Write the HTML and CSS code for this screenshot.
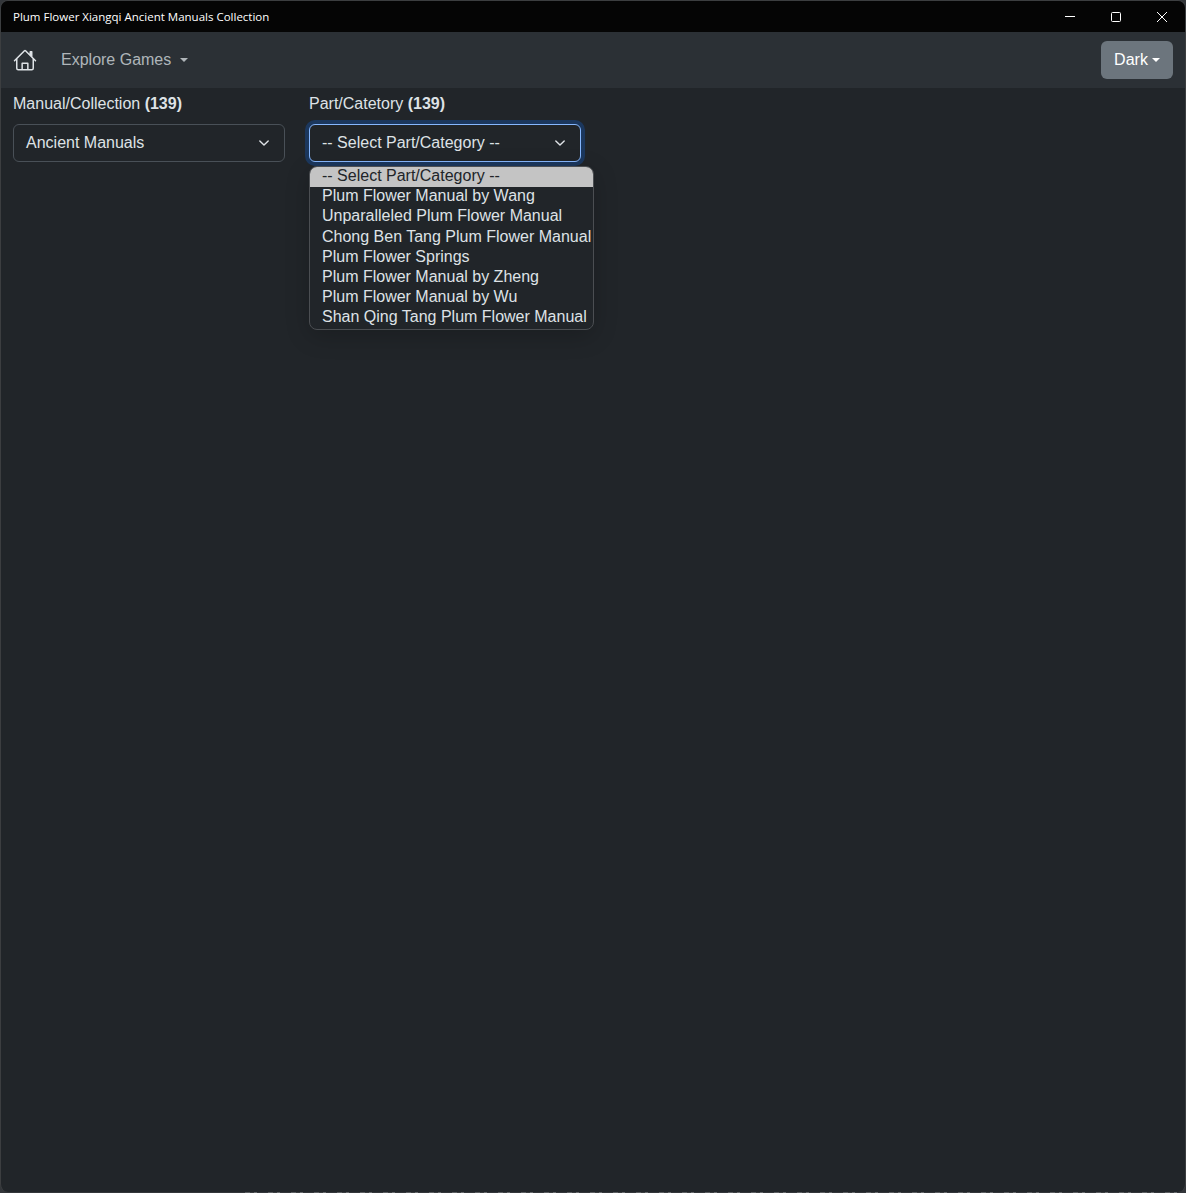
FILE: index.html
```html
<!DOCTYPE html>
<html>
<head>
    <meta name="viewport" content="width=device-width, initial-scale=1.0">
    <title>Plum Flower Xiangqi Ancient Manuals Collection</title>
    <link rel="stylesheet" href="styles.css">
</head>
<body>
    <div class="window">
        <div class="titlebar">
            <span class="title">Plum Flower Xiangqi Ancient Manuals Collection</span>
            <div class="controls">
                <svg class="ctl" width="46" height="32" viewBox="0 0 46 32"><path d="M18 15.5h10" stroke="#fff" fill="none"/></svg>
                <svg class="ctl" width="46" height="32" viewBox="0 0 46 32"><rect x="18.5" y="11.5" width="9" height="9" rx="1" stroke="#fff" fill="none"/></svg>
                <svg class="ctl" width="46" height="32" viewBox="0 0 46 32"><path d="M18 11l10 10M28 11l-10 10" stroke="#fff" fill="none"/></svg>
            </div>
        </div>

        <nav class="navbar">
            <svg class="home" width="24" height="24" viewBox="0 0 16 16" fill="#dee2e6">
                <path d="M8.707 1.5a1 1 0 0 0-1.414 0L.646 8.146a.5.5 0 0 0 .708.708L2 8.207V13.5A1.5 1.5 0 0 0 3.5 15h9a1.5 1.5 0 0 0 1.5-1.5V8.207l.646.647a.5.5 0 0 0 .708-.708L13 5.793V2.5a.5.5 0 0 0-.5-.5h-1a.5.5 0 0 0-.5.5v1.293zM13 7.207V13.5a.5.5 0 0 1-.5.5h-9a.5.5 0 0 1-.5-.5V7.207l5-5z"/>
                <path d="M5.6 14.5v-4.2a.6.6 0 0 1 .6-.6h3.6a.6.6 0 0 1 .6.6v4.2h-1V10.7H6.600v3.800z"/>
            </svg>
            <a class="nav-link caret">Explore Games</a>
            <button class="theme-btn caret">Dark</button>
        </nav>

        <div class="filters">
            <div class="field">
                <label>Manual/Collection <b>(139)</b></label>
                <div class="select">
                    <span>Ancient Manuals</span>
                    <svg width="16" height="16" viewBox="0 0 16 16"><path d="m2 5 6 6 6-6" fill="none" stroke="#dee2e6" stroke-width="2" stroke-linecap="round" stroke-linejoin="round" transform="translate(2.4 2.4) scale(.7)"/></svg>
                </div>
            </div>
            <div class="field">
                <label>Part/Catetory <b>(139)</b></label>
                <div class="select focused">
                    <span>-- Select Part/Category --</span>
                    <svg width="16" height="16" viewBox="0 0 16 16"><path d="m2 5 6 6 6-6" fill="none" stroke="#dee2e6" stroke-width="2" stroke-linecap="round" stroke-linejoin="round" transform="translate(2.4 2.4) scale(.7)"/></svg>
                </div>
                <ul class="options">
                    <li class="selected">-- Select Part/Category --</li>
                    <li>Plum Flower Manual by Wang</li>
                    <li>Unparalleled Plum Flower Manual</li>
                    <li>Chong Ben Tang Plum Flower Manual</li>
                    <li>Plum Flower Springs</li>
                    <li>Plum Flower Manual by Zheng</li>
                    <li>Plum Flower Manual by Wu</li>
                    <li>Shan Qing Tang Plum Flower Manual</li>
                </ul>
            </div>
        </div>
    </div>
    <div class="desktop-edge"></div>
</body>
</html>
```

FILE: styles.css
```css
* {
    box-sizing: border-box;
}
html, body {
    margin: 0;
    padding: 0;
    height: 100%;
    background: #33363a;
}
body {
    display: flex;
    flex-direction: column;
    font-family: "Liberation Sans", Arial, sans-serif;
    font-size: 16px;
    color: #dee2e6;
}
.window {
    flex: 1;
    min-height: 0;
    display: flex;
    flex-direction: column;
    background: #212529;
    border: 1px solid #3c3e40;
    border-bottom: 0;
    border-radius: 8px;
    overflow: hidden;
}
/* the desktop behind the window shows through in the last pixel row */
.desktop-edge {
    height: 1px;
    flex: none;
    margin-left: 245px;
    background: repeating-linear-gradient(90deg, #5c5f62 0 5px, #3a3d40 5px 9px, #66696c 9px 12px, #33363a 12px 23px);
}
.titlebar {
    height: 31px;
    flex: none;
    display: flex;
    align-items: center;
    justify-content: space-between;
    padding-left: 12px;
    background: #050505;
    color: #fff;
}
.title {
    font-family: "Open Sans", sans-serif;
    font-size: 11.5px;
}
.controls {
    display: flex;
}
.ctl {
    display: block;
}
.navbar {
    height: 56px;
    flex: none;
    display: flex;
    align-items: center;
    padding: 0 12px;
    background: #2b3035;
}
.home {
    margin-right: 24px;
}
.nav-link {
    color: rgba(222, 226, 230, .75);
}
.caret::after {
    content: "";
    display: inline-block;
    margin-left: 9px;
    vertical-align: 3px;
    border-top: 4.8px solid;
    border-left: 4.8px solid transparent;
    border-right: 4.8px solid transparent;
}
.theme-btn {
    margin-left: auto;
    height: 38px;
    width: 72px;
    padding: 0;
    font: inherit;
    color: #fff;
    background: #6c757d;
    border: 0;
    border-radius: 6px;
}
.theme-btn::after {
    margin-left: 4px;
}
.filters {
    display: flex;
    gap: 24px;
    padding: 6px 12px;
}
.field {
    position: relative;
    width: 272px;
}
.field label {
    display: block;
    margin-bottom: 11px;
    line-height: 19px;
}
.select {
    height: 38px;
    display: flex;
    align-items: center;
    justify-content: space-between;
    padding: 0 12px;
    background: #212529;
    border: 1px solid #495057;
    border-radius: 6px;
}
.select.focused {
    border-color: #86b7fe;
    box-shadow: 0 0 0 4px rgba(13, 110, 253, .25);
}
.options {
    position: absolute;
    top: 72px;
    left: 0;
    width: 285px;
    margin: 0;
    padding: 0;
    list-style: none;
    background: #212529;
    border: 1px solid #4b4e52;
    border-radius: 8px;
    overflow: hidden;
    box-shadow: 0 6px 24px rgba(0, 0, 0, .2);
}
.options li {
    height: 20.2px;
    line-height: 18px;
    padding-left: 12px;
    white-space: nowrap;
}
.options li.selected {
    background: #c4c4c4;
    color: #212529;
}
```
